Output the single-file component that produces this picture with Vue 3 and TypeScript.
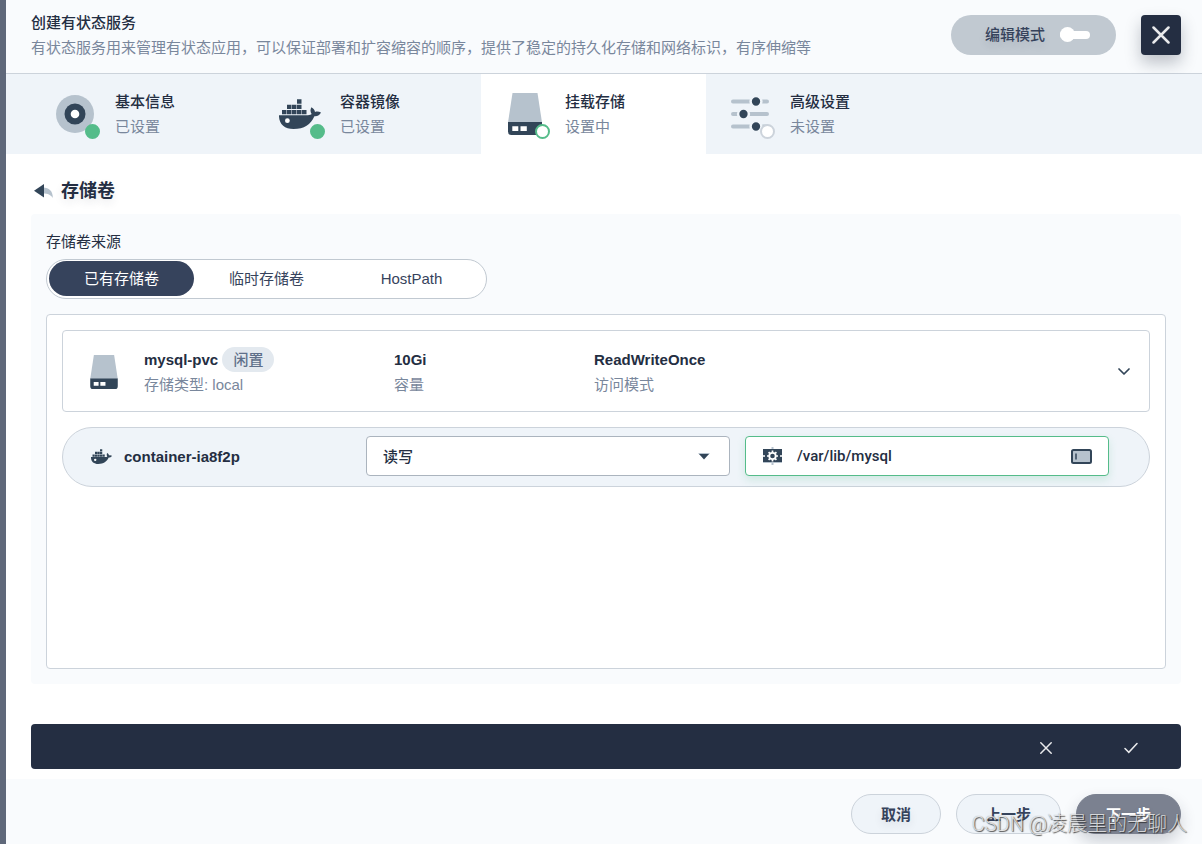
<script setup lang="ts">
import { ref } from 'vue'

type IconName = 'info' | 'docker' | 'drive' | 'sliders'
type Status = 'done' | 'current' | 'todo'

interface Step {
  title: string
  note: string
  icon: IconName
  status: Status
}

const steps: Step[] = [
  { title: '基本信息', note: '已设置', icon: 'info', status: 'done' },
  { title: '容器镜像', note: '已设置', icon: 'docker', status: 'done' },
  { title: '挂载存储', note: '设置中', icon: 'drive', status: 'current' },
  { title: '高级设置', note: '未设置', icon: 'sliders', status: 'todo' },
]

const sources: string[] = ['已有存储卷', '临时存储卷', 'HostPath']
const source = ref<string>(sources[0])
const editMode = ref<boolean>(false)
const access = ref<string>('读写')
const mountPath = ref<string>('/var/lib/mysql')
</script>

<template>
  <div class="page">
    <svg class="symbols" aria-hidden="true">
      <symbol id="docker" viewBox="0 0 42 30">
        <path
          fill="#324558"
          d="M18 .3h4.500v4.400H18zM8 5.700h4.500V10H8zM13 5.700h4.500V10H13zM18 5.700h4.500V10H18zM3 11h4.500v4.300H3zM8 11h4.500v4.300H8zM13 11h4.500v4.300H13zM18 11h4.500v4.300H18zM23 11h4.500v4.300H23z"
        />
        <path
          fill="#324558"
          d="M0 16.200h29c1.700 0 3-.5 3.600-1.200-1.400-2-1.500-4.400-.2-6.800 2 1.100 3.300 2.700 3.600 4.700 2-.6 4.100-.4 6 .7-1.200 2.600-3.300 3.800-6.600 3.600C31.600 25.500 25.300 30 14.500 30 5.500 30-.3 25 0 16.200z"
        />
        <circle cx="8.400" cy="21.700" r="2.400" fill="#fff" />
      </symbol>
      <symbol id="drive" viewBox="0 0 34 42">
        <path fill="#b6c2cd" d="M4.500 0h25L34 29.500H0z" />
        <path fill="#324558" d="M0 29h34v9.500a3.500 3.500 0 0 1-3.500 3.500h-27A3.500 3.500 0 0 1 0 38.500z" />
        <path fill="#fff" d="M4.300 33.300h6V38h-6zM12.500 33.300h6.300V38h-6.300z" />
      </symbol>
      <symbol id="info" viewBox="0 0 38 38">
        <circle cx="19" cy="19" r="19" fill="#b6c2cd" />
        <circle cx="19" cy="19" r="10.500" fill="#324558" />
        <circle cx="19" cy="19" r="4.300" fill="#fff" />
      </symbol>
      <symbol id="sliders" viewBox="0 0 38 34">
        <path d="M2 4.500h34M2 17h34M2 29.500h34" stroke="#b6c2cd" stroke-width="4" stroke-linecap="round" />
        <g fill="#324558" stroke="#eff4f9" stroke-width="2.500">
          <circle cx="25" cy="4.500" r="5.400" />
          <circle cx="12.500" cy="17" r="5.400" />
          <circle cx="25" cy="29.500" r="5.400" />
        </g>
      </symbol>
    </svg>

    <header class="header">
      <div class="heading">
        <h1>创建有状态服务</h1>
        <p>有状态服务用来管理有状态应用，可以保证部署和扩容缩容的顺序，提供了稳定的持久化存储和网络标识，有序伸缩等</p>
      </div>
      <button class="mode" type="button" role="switch" :aria-checked="editMode" @click="editMode = !editMode">
        编辑模式
        <span class="toggle" :class="{ on: editMode }"></span>
      </button>
      <button class="close" type="button" aria-label="关闭">
        <svg width="18" height="18" viewBox="0 0 18 18">
          <path d="M1.500 1.500l15 15M16.500 1.500l-15 15" stroke="#fff" stroke-opacity=".9" stroke-width="2.500" stroke-linecap="round" />
        </svg>
      </button>
    </header>

    <nav class="steps">
      <button v-for="s in steps" :key="s.title" type="button" class="step" :class="s.status">
        <span class="step-icon">
          <svg :class="s.icon"><use :href="'#' + s.icon" /></svg>
          <i class="dot"></i>
        </span>
        <span class="lines">
          <strong>{{ s.title }}</strong>
          <span>{{ s.note }}</span>
        </span>
      </button>
    </nav>

    <main class="content">
      <div class="back">
        <button type="button" aria-label="返回">
          <svg width="20" height="14" viewBox="0 0 20 14">
            <path fill="#b6c2cd" d="M9 3.500c6 0 10 3.500 9.800 10.500-2-3.300-5-4.500-9.800-4.500z" />
            <path fill="#324558" d="M10 0v13.600L0 6.800z" />
          </svg>
        </button>
        <h2>存储卷</h2>
      </div>

      <section class="panel">
        <div class="label">存储卷来源</div>
        <div class="segments">
          <button
            v-for="item in sources"
            :key="item"
            type="button"
            :class="{ active: item === source }"
            :aria-pressed="item === source"
            @click="source = item"
          >{{ item }}</button>
        </div>

        <div class="box">
          <article class="volume">
            <svg class="volume-icon"><use href="#drive" /></svg>
            <div class="lines volume-name">
              <strong>mysql-pvc <em>闲置</em></strong>
              <span>存储类型: local</span>
            </div>
            <div class="lines volume-size">
              <strong>10Gi</strong>
              <span>容量</span>
            </div>
            <div class="lines volume-mode">
              <strong>ReadWriteOnce</strong>
              <span>访问模式</span>
            </div>
            <button type="button" class="expand" aria-label="展开">
              <svg width="12" height="8" viewBox="0 0 12 8">
                <path d="M1 1l5 5 5-5" fill="none" stroke="#324558" stroke-width="1.700" stroke-linecap="round" stroke-linejoin="round" />
              </svg>
            </button>
          </article>

          <div class="mount">
            <div class="container-name">
              <svg><use href="#docker" /></svg>
              <strong>container-ia8f2p</strong>
            </div>
            <div class="field">
              <select v-model="access" aria-label="访问权限">
                <option>读写</option>
                <option>只读</option>
                <option>不挂载</option>
              </select>
              <svg width="12" height="7" viewBox="0 0 12 7">
                <path fill="#b6c2cd" d="M0 0h12l-2 2H2z" />
                <path fill="#324558" d="M1 1h10L6 6.500z" />
              </svg>
            </div>
            <div class="field path">
              <svg width="19" height="18" viewBox="0 0 19 18">
                <path fill="#324558" d="M0 2h19v14H0z" />
                <path fill="#b6c2cd" d="M8.500 0h2v2h-2zM8.500 16h2v2h-2zM0 15h19v1H0z" />
                <circle cx="9.500" cy="9" r="3.200" fill="none" stroke="#fff" stroke-width="1.800" />
                <path
                  d="M9.500 3.500v2M9.500 12.500v2M4 9h2M13 9h2M5.600 5.100l1.200 1.200M12.200 11.700l1.200 1.200M5.600 12.900l1.200-1.200M12.200 6.300l1.200-1.200M0 9h2M17 9h2"
                  stroke="#fff"
                  stroke-width="1.700"
                />
              </svg>
              <input v-model="mountPath" type="text" aria-label="挂载路径" />
              <svg width="21" height="15" viewBox="0 0 21 15">
                <rect x="1" y="1" width="19" height="13" rx="1.500" fill="#b6c2cd" stroke="#324558" stroke-width="2" />
                <path d="M5 4.500v6" stroke="#324558" stroke-width="1.500" />
              </svg>
            </div>
          </div>
        </div>
      </section>

      <div class="confirm">
        <button type="button" aria-label="取消选择">
          <svg width="12" height="12" viewBox="0 0 12 12">
            <path d="M.8.8l10.400 10.400M11.200.8L.8 11.200" stroke="#fff" stroke-opacity=".9" stroke-width="1.500" stroke-linecap="round" />
          </svg>
        </button>
        <button type="button" aria-label="确认选择">
          <svg width="14" height="12" viewBox="0 0 14 12">
            <path d="M1 6.500l3.800 3.800L13 1.500" fill="none" stroke="#fff" stroke-opacity=".9" stroke-width="1.500" stroke-linecap="round" />
          </svg>
        </button>
      </div>
    </main>

    <footer class="footer">
      <button type="button" class="cancel">取消</button>
      <button type="button">上一步</button>
      <button type="button" class="next">下一步</button>
    </footer>
    <div class="watermark">CSDN @凌晨里的无聊人</div>
  </div>
</template>

<style>
body {
  margin: 0;
}
</style>

<style scoped>
.page {
  position: relative;
  box-sizing: border-box;
  display: flex;
  flex-direction: column;
  min-height: 100vh;
  border-left: 6px solid #5f687a;
  background: #fff;
  color: #242e42;
  font-family: "Liberation Sans", "Noto Sans CJK SC", sans-serif;
  font-size: 15px;
  line-height: 25px;
}

.page * {
  box-sizing: border-box;
}

.symbols {
  position: absolute;
  width: 0;
  height: 0;
}

button {
  margin: 0;
  padding: 0;
  border: 0;
  background: none;
  color: inherit;
  font: inherit;
  cursor: pointer;
}

svg {
  display: block;
  flex: none;
}

strong {
  font-weight: 500;
}

.header {
  display: flex;
  align-items: center;
  gap: 25px;
  min-height: 74px;
  padding: 0 21px 4px 25px;
  border-bottom: 1px solid #ccd3db;
  background: #f9fbfd;
}

.heading {
  flex: 1;
}

h1,
h2,
p {
  margin: 0;
}

h1 {
  font-size: 15px;
  font-weight: 500;
  line-height: 25px;
}

p {
  color: #79879c;
}

.mode {
  display: flex;
  align-items: center;
  justify-content: center;
  gap: 15px;
  width: 165px;
  height: 40px;
  padding-left: 8px;
  border-radius: 20px;
  background: #c1c9d1;
  color: #36435c;
  font-weight: 500;
  text-shadow: 0 4px 8px rgba(36, 46, 66, 0.1);
}

.toggle {
  display: flex;
  align-items: center;
  width: 30px;
  height: 8px;
  border-radius: 4px;
  background: #fff;
}

.toggle::before {
  content: "";
  width: 15px;
  height: 15px;
  border-radius: 50%;
  background: #fff;
}

.toggle.on {
  justify-content: flex-end;
}

.close {
  display: grid;
  place-items: center;
  width: 40px;
  height: 40px;
  border-radius: 4px;
  background: #242e42;
  box-shadow: 0 8px 16px rgba(36, 46, 66, 0.28);
}

.steps {
  display: flex;
  padding-left: 25px;
  background: #eff4f9;
}

.step {
  display: flex;
  align-items: center;
  gap: 15px;
  width: 225px;
  height: 80px;
  padding: 0 19px;
  text-align: left;
}

.step.current {
  background: #fff;
}

.step-icon {
  position: relative;
  display: grid;
  place-items: center;
  width: 50px;
  height: 50px;
}

.info {
  width: 38px;
  height: 38px;
}

.docker {
  width: 42px;
  height: 30px;
}

.drive {
  width: 34px;
  height: 42px;
}

.sliders {
  width: 38px;
  height: 34px;
}

.dot {
  position: absolute;
  right: 0;
  bottom: 0;
  width: 15px;
  height: 15px;
  border: 2px solid #55bc8a;
  border-radius: 50%;
  background: #55bc8a;
}

.current .dot {
  background: #fff;
}

.todo .dot {
  border-color: #ccd3db;
  background: #fff;
}

.lines {
  display: flex;
  flex-direction: column;
}

.lines > span {
  color: #79879c;
}

.content {
  flex: 1;
  display: flex;
  flex-direction: column;
  padding: 22px 21px 10px 25px;
}

.back {
  display: flex;
  align-items: center;
  gap: 7px;
  margin-bottom: 8px;
  padding-left: 3px;
}

h2 {
  font-size: 18px;
  font-weight: 700;
  line-height: 30px;
  text-shadow: 0 4px 8px rgba(36, 46, 66, 0.1);
}

.panel {
  flex: 1;
  display: flex;
  flex-direction: column;
  padding: 15px;
  border-radius: 4px;
  background: #f9fbfd;
}

.label {
  margin-bottom: 5px;
}

.segments {
  display: flex;
  align-self: flex-start;
  height: 40px;
  margin-bottom: 15px;
  padding: 1px 2px 2px;
  border: 1px solid #c1c9d1;
  border-radius: 20px;
  background: #fff;
}

.segments button {
  width: 145px;
  border-radius: 18px;
  color: #36435c;
}

.segments .active {
  background: #36435c;
  color: #fff;
}

.box {
  flex: 1;
  padding: 15px;
  border: 1px solid #ccd3db;
  border-radius: 4px;
  background: #fff;
}

.volume {
  display: flex;
  align-items: center;
  min-height: 82px;
  margin-bottom: 15px;
  padding: 1px 16px 0 27px;
  border: 1px solid #ccd3db;
  border-radius: 4px;
}

.volume-icon {
  width: 28px;
  height: 34px;
  margin-right: 26px;
}

.volume strong,
.container-name strong {
  font-weight: 700;
}

.volume-name {
  width: 250px;
}

.volume-size {
  width: 200px;
}

.volume-mode {
  flex: 1;
}

em {
  display: inline-block;
  padding: 0 11px;
  border-radius: 13px;
  background: #e3e9ef;
  color: #5f708a;
  font-style: normal;
  font-weight: 500;
}

.expand {
  display: grid;
  place-items: center;
  width: 18px;
  height: 30px;
}

.mount {
  display: grid;
  grid-template-columns: 260px 1fr 1fr;
  align-items: center;
  gap: 15px;
  height: 60px;
  padding: 0 40px 2px 28px;
  border: 1px solid #ccd3db;
  border-radius: 30px;
  background: #eff4f9;
}

.container-name {
  display: flex;
  align-items: center;
  gap: 12px;
}

.container-name svg {
  width: 21px;
  height: 15px;
}

.field {
  display: flex;
  align-items: center;
  height: 40px;
  padding: 0 19px 0 16px;
  border: 1px solid #abb4be;
  border-radius: 4px;
  background: #fff;
}

.field select,
.field input {
  flex: 1;
  min-width: 0;
  height: 38px;
  margin: 0;
  padding: 0;
  border: 0;
  outline: 0;
  appearance: none;
  background: transparent;
  color: #242e42;
  font: inherit;
  font-weight: 500;
}

.field input {
  font-family: Roboto, "Noto Sans CJK SC", sans-serif;
}

.path {
  gap: 15px;
  padding: 0 16px 0 17px;
  border-color: #55bc8a;
  box-shadow: 0 4px 8px rgba(85, 188, 138, 0.2);
}

.confirm {
  display: flex;
  justify-content: flex-end;
  height: 45px;
  margin-top: 40px;
  padding: 2px 8px 0 0;
  border-radius: 4px;
  background: #242e42;
}

.confirm button {
  display: grid;
  place-items: center;
  width: 85px;
}

.footer {
  display: flex;
  justify-content: flex-end;
  gap: 15px;
  padding: 15px 21px 10px;
  background: #f9fbfd;
}

.footer button {
  width: 105px;
  height: 40px;
  border: 1px solid #ccd3db;
  border-radius: 20px;
  background: #eff4f9;
  color: #36435c;
  font-weight: 700;
  text-shadow: 0 4px 8px rgba(36, 46, 66, 0.1);
}

.footer .cancel {
  width: 90px;
}

.footer .next {
  border-color: #7b8190;
  background: #7b8190;
  color: #fff;
  box-shadow: 0 8px 16px rgba(36, 46, 66, 0.2);
}

.watermark {
  position: absolute;
  right: 15px;
  bottom: 6px;
  color: rgba(255, 255, 255, 0.75);
  font-family: Roboto, "Noto Sans CJK SC", sans-serif;
  font-size: 20px;
  font-weight: 300;
  line-height: 28px;
  text-shadow: 1px 1px 1px rgba(40, 40, 40, 0.8), 0 0 1px rgba(60, 60, 60, 0.5);
  pointer-events: none;
}
</style>
